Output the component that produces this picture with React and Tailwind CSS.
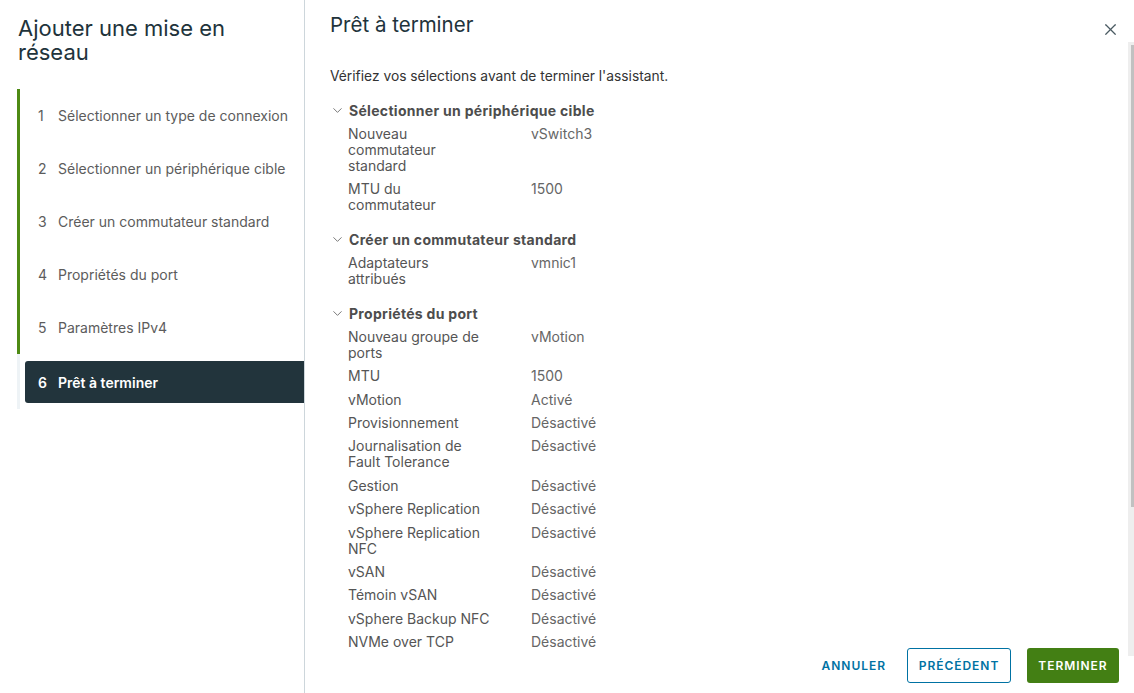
import { X, ChevronDown } from 'lucide-react'

const STEPS = [
  'Sélectionner un type de connexion',
  'Sélectionner un périphérique cible',
  'Créer un commutateur standard',
  'Propriétés du port',
  'Paramètres IPv4',
]

const SECTIONS = [
  {
    title: 'Sélectionner un périphérique cible',
    rows: [
      [['Nouveau', 'commutateur', 'standard'], 'vSwitch3'],
      [['MTU du', 'commutateur'], '1500'],
    ],
  },
  {
    title: 'Créer un commutateur standard',
    rows: [[['Adaptateurs', 'attribués'], 'vmnic1']],
  },
  {
    title: 'Propriétés du port',
    rows: [
      [['Nouveau groupe de', 'ports'], 'vMotion'],
      [['MTU'], '1500'],
      [['vMotion'], 'Activé'],
      [['Provisionnement'], 'Désactivé'],
      [['Journalisation de', 'Fault Tolerance'], 'Désactivé'],
      [['Gestion'], 'Désactivé'],
      [['vSphere Replication'], 'Désactivé'],
      [['vSphere Replication', 'NFC'], 'Désactivé'],
      [['vSAN'], 'Désactivé'],
      [['Témoin vSAN'], 'Désactivé'],
      [['vSphere Backup NFC'], 'Désactivé'],
      [['NVMe over TCP'], 'Désactivé'],
    ],
  },
]

export default function App() {
  return (
    <div
      className="flex h-[693px] w-[1134px] overflow-hidden bg-white"
      style={{ fontFamily: 'Inter, "Noto Sans", sans-serif' }}
    >
      {/* Sidebar */}
      <div className="w-[305px] shrink-0 border-r border-[#cdd6db]">
        <h1 className="pl-[18px] pt-[16px] pr-4 text-[22px] leading-[24px] text-[#21333b]">
          Ajouter une mise en réseau
        </h1>
        <div className="mt-[25px] pl-[17px]">
          <div className="border-l-[3px] border-[#4e8a14]">
            {STEPS.map((s, i) => (
              <div key={s} className="flex h-[53px] items-center pl-[18px] text-[14px] text-[#5c5c5c]">
                <span className="w-[20px]">{i + 1}</span>
                <span>{s}</span>
              </div>
            ))}
          </div>
          <div className="border-l-[3px] border-[#eef3f6] pt-[7px] pb-[6px] pl-[5px]">
            <div className="flex h-[42px] items-center rounded-l-[3px] bg-[#22343c] pl-[13px] text-[14px] font-semibold text-white">
              <span className="w-[20px]">6</span>
              <span>Prêt à terminer</span>
            </div>
          </div>
        </div>
      </div>

      {/* Main */}
      <div className="flex min-w-0 flex-1 flex-col">
        <div className="flex h-[42px] items-start justify-between pl-[25px] pr-[14px] pt-[12px]">
          <h2 className="text-[20.5px] leading-[26px] text-[#21333b]">Prêt à terminer</h2>
          <X size={19} strokeWidth={1.5} className="mt-[8px] text-[#4a5a62]" />
        </div>

        <div className="flex h-[614px]">
          <div className="flex-1 overflow-hidden pl-[25px] pt-[26px]">
            <p className="text-[13.8px] leading-[16px] text-[#333]">
              Vérifiez vos sélections avant de terminer l'assistant.
            </p>
            <div className="mt-[15px]">
              {SECTIONS.map((sec, si) => (
                <div key={sec.title} className={si > 0 ? 'mt-[11px]' : ''}>
                  <div className="flex items-center py-[3.7px] text-[14px] font-bold leading-[16px] tracking-[0.3px] text-[#4d4d4d]">
                    <ChevronDown size={15} strokeWidth={1.4} className="mr-[4px] text-[#666]" />
                    {sec.title}
                  </div>
                  {sec.rows.map(([label, value]) => (
                    <div key={label.join(' ')} className="flex py-[3.7px] pl-[18px] text-[14px] leading-[16px]">
                      <div className="w-[183px] shrink-0 text-[#555]">
                        {label.map(l => <div key={l}>{l}</div>)}
                      </div>
                      <div className="text-[#666]">{value}</div>
                    </div>
                  ))}
                </div>
              ))}
            </div>
          </div>
          {/* scrollbar */}
          <div className="w-[6px] shrink-0 bg-[#eeeeee] pl-[3px] pt-[3px]">
            <div className="h-[462px] bg-[#c1c1c1]" />
          </div>
        </div>

        <div className="-mt-[8px] flex items-center justify-end gap-4 pr-[15px]">
          <button className="mr-[5px] h-[35px] text-[12px] font-semibold tracking-[0.08em] text-[#0072a3]">
            ANNULER
          </button>
          <button className="h-[35px] w-[104px] rounded-[3px] border border-[#0072a3] text-[12px] font-semibold tracking-[0.08em] text-[#0072a3]">
            PRÉCÉDENT
          </button>
          <button className="h-[35px] w-[92px] rounded-[3px] bg-[#437f14] text-[12px] font-semibold tracking-[0.08em] text-white">
            TERMINER
          </button>
        </div>
      </div>
    </div>
  )
}
